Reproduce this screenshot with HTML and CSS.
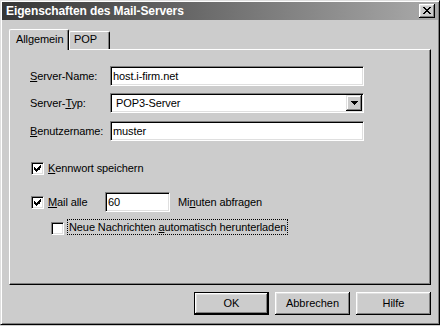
FILE: index.html
```html
<!DOCTYPE html>
<html lang="de">
<head>
  <meta charset="UTF-8">
  <title>Eigenschaften des Mail-Servers</title>
  <link rel="stylesheet" href="styles.css">
</head>
<body>
  <div class="window">
    <div class="titlebar">
      <span class="title">Eigenschaften des Mail-Servers</span>
      <button class="close" type="button">
        <svg width="8" height="7" viewBox="0 0 8 7" shape-rendering="crispEdges">
          <path d="M0 0h2v1h-2zM6 0h2v1h-2zM1 1h2v1h-2zM5 1h2v1h-2zM2 2h4v1h-4zM3 3h2v1h-2zM2 4h4v1h-4zM1 5h2v1h-2zM5 5h2v1h-2zM0 6h2v1h-2zM6 6h2v1h-2z" fill="#000"/>
        </svg>
      </button>
    </div>

    <div class="dialog">
      <div class="tabs">
        <div class="tab active">Allgemein</div>
        <div class="tab pop">POP</div>
      </div>

      <div class="panel">
        <div class="fields">
          <label><u>S</u>erver-Name:</label>
          <div class="field">host.i-firm.net</div>

          <label>Server-<u>T</u>yp:</label>
          <div class="field combo">
            <span class="combo-text">POP3-Server</span>
            <span class="drop">
              <svg width="7" height="4" viewBox="0 0 7 4" shape-rendering="crispEdges">
                <path d="M0 0h7v1h-7zM1 1h5v1h-5zM2 2h3v1h-3zM3 3h1v1h-1z" fill="#000"/>
              </svg>
            </span>
          </div>

          <label><u>B</u>enutzername:</label>
          <div class="field">muster</div>
        </div>

        <div class="check first">
          <span class="box checked"></span>
          <span class="check-label"><u>K</u>ennwort speichern</span>
        </div>

        <div class="check mail">
          <span class="box checked"></span>
          <span class="check-label mail-label"><u>M</u>ail alle</span>
          <div class="field minutes">60</div>
          <span class="after">Mi<u>n</u>uten abfragen</span>
        </div>

        <div class="check sub">
          <span class="box"></span>
          <span class="focus">Neue Nachrichten <u>a</u>utomatisch herunterladen</span>
        </div>
      </div>

      <div class="buttons">
        <button class="btn default" type="button">OK</button>
        <button class="btn" type="button">Abbrechen</button>
        <button class="btn" type="button">Hilfe</button>
      </div>
    </div>
  </div>
</body>
</html>
```

FILE: styles.css
```css
* {
  box-sizing: border-box;
}
body {
  margin: 0;
  background: #ccc;
  font-family: "Liberation Sans", Arial, sans-serif;
  font-size: 11px;
  letter-spacing: -0.1px;
  color: #000;
}
u {
  text-decoration: underline;
  text-underline-offset: 1px;
}
.window {
  width: 440px;
  height: 325px;
  padding: 1px;
  background: #ccc;
  border: 1px solid;
  border-color: #dfdfdf #000 #000 #dfdfdf;
  box-shadow: inset 1px 1px #fff, inset -1px -1px #808080;
  display: flex;
  flex-direction: column;
}

/* title bar */
.titlebar {
  height: 18px;
  display: flex;
  align-items: center;
  justify-content: space-between;
  padding: 0 3px 0 4px;
  background: linear-gradient(90deg, #363636 0%, #5e5e5e 35%, #aaa 100%);
  color: #fff;
  font-weight: bold;
  font-size: 12px;
  letter-spacing: -0.1px;
  line-height: 18px;
}
.close {
  width: 16px;
  height: 14px;
  padding: 0;
  border: 0;
  background: #ccc;
  box-shadow: inset -1px -1px #000, inset 1px 1px #fff, inset -2px -2px #808080, inset 2px 2px #dfdfdf;
  display: flex;
  align-items: center;
  justify-content: center;
}
.close svg {
  display: block;
  margin: 0 1px 1px 0;
}

/* dialog */
.dialog {
  flex: 1;
  padding: 9px 7px 0 7px;
  display: flex;
  flex-direction: column;
}
.tabs {
  display: flex;
  align-items: flex-start;
  height: 20px;
}
.tab {
  height: 18px;
  margin-top: 2px;
  padding: 1px 0 0 4px;
  line-height: 13px;
  border-top: 1px solid #fff;
  border-left: 1px solid #fff;
  border-right: 1px solid #000;
  border-radius: 2px 2px 0 0;
  box-shadow: inset -1px 0 #808080;
  background: #ccc;
}
.tab.active {
  width: 60px;
  height: 21px;
  margin-top: 0;
  padding: 3px 0 0 6px;
  position: relative;
  z-index: 1;
}
.tab.pop {
  width: 41px;
}
.panel {
  height: 236px;
  border: 1px solid;
  border-color: #fff #000 #000 #fff;
  box-shadow: inset -1px -1px #808080;
  padding: 16px 0 0 20px;
}

/* text fields */
.fields {
  display: grid;
  grid-template-columns: 80px 254px;
  grid-template-rows: 20px 21px 20px;
  row-gap: 7px;
  align-items: start;
}
.fields label {
  line-height: 20px;
}
.field {
  height: 20px;
  padding: 0 2px;
  line-height: 18px;
  background: #fff;
  border: 1px solid;
  border-color: #808080 #fff #fff #808080;
  box-shadow: inset 1px 1px #000, inset -1px -1px #dfdfdf;
  white-space: nowrap;
}
.combo {
  display: flex;
  justify-content: space-between;
  padding: 1px 1px 1px 5px;
  line-height: 16px;
}
.drop {
  width: 16px;
  height: 16px;
  background: #ccc;
  box-shadow: inset -1px -1px #000, inset 1px 1px #dfdfdf, inset -2px -2px #808080, inset 2px 2px #fff;
  display: flex;
  align-items: center;
  justify-content: center;
}
.drop svg {
  display: block;
}

/* check boxes */
.check {
  display: flex;
  align-items: flex-start;
  padding-left: 1px;
}
.check.first {
  margin-top: 21px;
  height: 13px;
  line-height: 13px;
}
.check.mail {
  margin-top: 17px;
  height: 20px;
  line-height: 20px;
}
.check.sub {
  margin-top: 7px;
  padding-left: 21px;
  height: 16px;
}
.box {
  flex: none;
  width: 13px;
  height: 13px;
  background: #fff;
  border: 1px solid;
  border-color: #808080 #fff #fff #808080;
  box-shadow: inset 1px 1px #000, inset -1px -1px #dfdfdf;
}
.box.checked {
  background: #fff url("data:image/svg+xml,%3Csvg xmlns='http://www.w3.org/2000/svg' width='7' height='7' shape-rendering='crispEdges'%3E%3Cpath d='M6 0h1v3h-1zM5 1h1v4h-1zM4 2h1v3h-1zM3 3h1v3h-1zM2 4h1v3h-1zM1 3h1v3h-1zM0 2h1v3h-1z'/%3E%3C/svg%3E") no-repeat 2px 2px;
}
.mail .box {
  margin-top: 4px;
}
.sub .box {
  margin-top: 3px;
}
.check-label {
  margin-left: 4px;
}
.mail-label {
  width: 57px;
  margin-left: 4px;
}
.minutes {
  width: 65px;
  padding-left: 2px;
}
.after {
  margin-left: 8px;
}
.focus {
  margin-left: 3px;
  padding: 0 1px;
  height: 16px;
  line-height: 14px;
  border: 1px dotted #000;
}

/* buttons */
.buttons {
  display: flex;
  justify-content: flex-end;
  gap: 6px;
  margin-top: 7px;
}
.btn {
  width: 75px;
  height: 23px;
  padding: 0;
  border: 0;
  font: inherit;
  color: #000;
  line-height: 23px;
  background: #ccc;
  box-shadow: inset -1px -1px #000, inset 1px 1px #fff, inset -2px -2px #808080, inset 2px 2px #dfdfdf;
}
.btn.default {
  border: 1px solid #000;
  line-height: 21px;
}
```
